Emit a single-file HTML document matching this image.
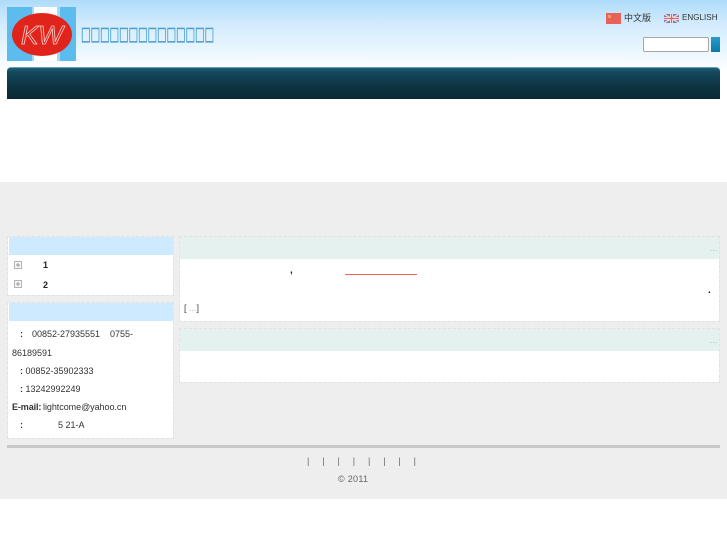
<!DOCTYPE html>
<html lang="zh"><head><meta charset="utf-8"><title>KW</title>
<style>
html,body{margin:0;padding:0}
body{width:727px;height:545px;position:relative;overflow:hidden;background:#fff;font-family:"Liberation Sans","Noto Sans CJK SC",sans-serif;font-size:9px;color:#333}
.a{position:absolute}
.panel{position:absolute;background:#fff;outline:1px dashed #e2e2e2}
.t{position:absolute;white-space:nowrap;line-height:12px}
</style></head><body>
<div class="a" style="left:0;top:0;width:727px;height:99px;background:linear-gradient(#aedcfb 0,#d3ecfd 25px,#eef8fe 55px,#fff 72px)"></div>
<svg class="a" style="left:7px;top:7px" width="69" height="54" viewBox="0 0 69 54">
<rect width="69" height="54" fill="#5dbcee"/><rect x="27" width="25" height="54" fill="#fff"/><rect x="50" width="3" height="54" fill="#a5daf6"/><rect x="25" width="2" height="54" fill="#a5daf6"/>
<ellipse cx="35" cy="27.500" rx="30" ry="21.500" fill="#e0241b"/>
<text x="35" y="37" text-anchor="middle" font-family="Liberation Sans" font-size="26" font-style="italic" fill="#e0241b" stroke="#f6cfca" stroke-width=".8">KW</text></svg>
<div class="t" id="title" style="left:81px;top:22px;line-height:24px;font-family:'DejaVu Sans',sans-serif;font-size:19px;color:#4a9fcb;transform:scaleX(.529);transform-origin:0 50%;-webkit-text-stroke:.4px #4a9fcb">□□□□□□□□□□□□□□</div>
<svg class="a" style="left:606px;top:13px" width="15" height="11"><rect width="15" height="11" fill="#e8625a"/><rect x="2" y="2" width="3" height="3" fill="#ee9a70"/></svg>
<div class="t" style="left:624px;top:12px;font-size:9px;color:#333">中文版</div>
<svg class="a" style="left:664px;top:14px" width="15" height="9"><rect width="15" height="9" fill="#6c7db5"/><path d="M0 0L15 9M15 0L0 9" stroke="#ecd8dc" stroke-width="1.500"/><path d="M7.500 0V9M0 4.500H15" stroke="#fff" stroke-width="3"/><path d="M7.500 0V9M0 4.500H15" stroke="#d8686a" stroke-width="1.500"/></svg>
<div class="t" style="left:682px;top:12px;font-size:8.100px;color:#333">ENGLISH</div>
<div class="a" style="left:643px;top:37px;width:64px;height:13px;background:#fff;border:1px solid #a8a8a8;border-radius:2px"></div>
<div class="a" style="left:711px;top:37px;width:9px;height:15px;background:linear-gradient(#2a9ccc,#0a78aa)"></div>
<div class="a" style="left:7px;top:67px;width:713px;height:32px;border-radius:4px 4px 0 0;background:linear-gradient(#1f5f78 0,#14495f 4px,#0d3442 18px,#0a2a35 100%);box-sizing:border-box;border-top:1px solid #6f9cb0"></div>
<div class="a" style="left:0;top:182px;width:727px;height:317px;background:#eee"></div>

<div class="panel" style="left:8px;top:237px;width:165px;height:58px"></div>
<div class="a" style="left:9px;top:237px;width:164px;height:18px;background:#cdeaff"></div>
<svg class="a" style="left:14px;top:261px" width="8" height="8"><rect x=".5" y=".5" width="7" height="7" fill="#f6f6f6" stroke="#b4b4b4"/><path d="M2 4H6M4 2V6" stroke="#999"/></svg>
<svg class="a" style="left:14px;top:280px" width="8" height="8"><rect x=".5" y=".5" width="7" height="7" fill="#f6f6f6" stroke="#b4b4b4"/><path d="M2 4H6M4 2V6" stroke="#999"/></svg>
<div class="t" style="left:43px;top:259px;font-weight:bold;color:#222">1</div>
<div class="t" style="left:43px;top:279px;font-weight:bold;color:#222">2</div>

<div class="panel" style="left:8px;top:303px;width:165px;height:135px"></div>
<div class="a" style="left:9px;top:303px;width:164px;height:18px;background:#cdeaff"></div>
<div class="t" style="left:20px;top:328px;font-weight:bold">:</div>
<div class="t" style="left:32px;top:328px">00852-27935551</div>
<div class="t" style="left:110px;top:328px">0755-</div>
<div class="t" style="left:12px;top:347px">86189591</div>
<div class="t" style="left:20px;top:365px"><b>:</b> 00852-35902333</div>
<div class="t" style="left:20px;top:383px"><b>:</b> 13242992249</div>
<div class="t" style="left:12px;top:401px;font-weight:bold;letter-spacing:-.1px">E-mail:</div>
<div class="t" style="left:43px;top:401px;letter-spacing:-.05px">lightcome@yahoo.cn</div>
<div class="t" style="left:20px;top:419px;font-weight:bold">:</div>
<div class="t" style="left:58px;top:419px">5 21-A</div>

<div class="panel" style="left:180px;top:237px;width:539px;height:84px"></div>
<div class="a" style="left:180px;top:237px;width:539px;height:22px;background:#e5f1ef"></div>
<div class="t" style="left:710px;top:243px;color:#7fb5d8;font-size:8px;letter-spacing:.3px">...</div>
<div class="t" style="left:290px;top:265px;font-weight:bold;color:#222;font-size:10px">,</div>
<div class="a" style="left:345px;top:274px;width:72px;height:1px;background:#e8625a"></div>
<div class="t" style="left:708px;top:285px;font-weight:bold;color:#111;font-size:10px">.</div>
<div class="t" style="left:184px;top:302px;color:#444">[ <span style="color:#8cc0e0">...</span>]</div>

<div class="panel" style="left:180px;top:329px;width:539px;height:53px"></div>
<div class="a" style="left:180px;top:329px;width:539px;height:22px;background:#e5f1ef"></div>
<div class="t" style="left:710px;top:335px;color:#7fb5d8;font-size:8px;letter-spacing:.3px">...</div>

<div class="a" style="left:7px;top:445px;width:713px;height:3px;background:#c8c8c8"></div>
<div class="t" style="left:307px;top:455px;color:#666;word-spacing:10.400px">| | | | | | | |</div>
<div class="t" style="left:338px;top:473px;color:#666;letter-spacing:.3px">© 2011</div>
</body></html>
